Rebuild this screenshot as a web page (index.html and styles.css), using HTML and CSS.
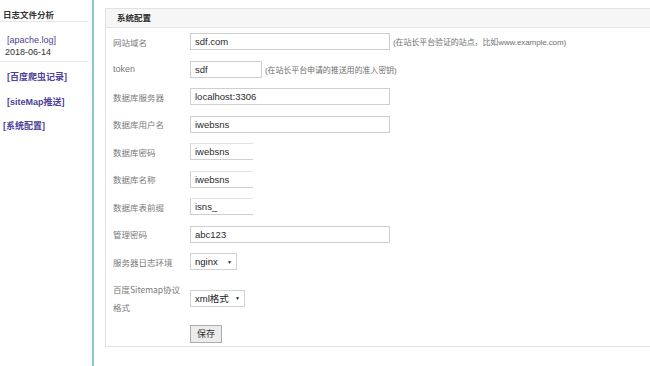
FILE: index.html
```html
<!DOCTYPE html>
<html lang="zh">
<head>
<meta charset="utf-8">
<title>系统配置</title>
<link rel="stylesheet" href="styles.css">
</head>
<body>
<div class="page">
  <aside class="side">
    <div class="side-title">日志文件分析</div>
    <div class="side-file">
      <a class="file-link">[apache.log]</a>
      <div class="file-date">2018-06-14</div>
    </div>
    <nav class="side-nav">
      <a class="nav-link">[百度爬虫记录]</a>
      <a class="nav-link">[siteMap推送]</a>
      <a class="nav-link nav-last">[系统配置]</a>
    </nav>
  </aside>
  <main class="main">
    <section class="panel">
      <div class="panel-head">系统配置</div>
      <div class="form">
        <div class="row">
          <label class="lbl">网站域名</label>
          <div class="ctl"><span class="inp w200">sdf.com</span><span class="hint">(在站长平台验证的站点，比如www.example.com)</span></div>
        </div>
        <div class="row">
          <label class="lbl lat">token</label>
          <div class="ctl"><span class="inp w72">sdf</span><span class="hint">(在站长平台申请的推送用的准入密钥)</span></div>
        </div>
        <div class="row">
          <label class="lbl">数据库服务器</label>
          <div class="ctl"><span class="inp w200">localhost:3306</span></div>
        </div>
        <div class="row">
          <label class="lbl">数据库用户名</label>
          <div class="ctl"><span class="inp w200">iwebsns</span></div>
        </div>
        <div class="row">
          <label class="lbl">数据库密码</label>
          <div class="ctl"><span class="inp cut">iwebsns</span></div>
        </div>
        <div class="row">
          <label class="lbl">数据库名称</label>
          <div class="ctl"><span class="inp cut">iwebsns</span></div>
        </div>
        <div class="row">
          <label class="lbl">数据库表前缀</label>
          <div class="ctl"><span class="inp cut">isns_</span></div>
        </div>
        <div class="row">
          <label class="lbl">管理密码</label>
          <div class="ctl"><span class="inp w200">abc123</span></div>
        </div>
        <div class="row">
          <label class="lbl">服务器日志环境</label>
          <div class="ctl"><span class="sel w46">nginx<span class="arrow">▼</span></span></div>
        </div>
        <div class="row row-tall">
          <label class="lbl lbl-2">百度Sitemap协议<br>格式</label>
          <div class="ctl"><span class="sel w54">xml格式<span class="arrow">▼</span></span></div>
        </div>
        <div class="row">
          <span class="lbl"></span>
          <div class="ctl"><span class="btn">保存</span></div>
        </div>
      </div>
    </section>
  </main>
</div>
</body>
</html>
```
FILE: styles.css
```css
html, body {
  margin: 0;
  padding: 0;
  background: #fff;
  overflow: hidden;
}
body {
  font-family: "Liberation Sans", "Noto Sans CJK SC", sans-serif;
  color: #333;
  width: 650px;
  height: 366px;
}
.page {
  display: flex;
  height: 366px;
}
.side {
  width: 92px;
  flex: none;
  border-right: 2px solid #8fc7c6;
  box-sizing: content-box;
}
.side-title {
  font-size: 8.5px;
  font-weight: bold;
  padding: 8px 0 0 3px;
  height: 13px;
  border-bottom: 1px solid #e6e6e6;
  margin-right: 4px;
  color: #333;
}
.side-file {
  padding: 12px 0 0 5px;
  height: 27px;
  border-bottom: 1px solid #e6e6e6;
  margin-right: 4px;
  font-size: 9px;
  line-height: 12px;
}
.file-link {
  display: block;
  color: #4d3f9a;
  padding-left: 2px;
}
.file-date {
  color: #333;
}
.side-nav {
  display: flex;
  flex-direction: column;
  padding: 9px 0 0 7px;
  gap: 11.5px;
}
.nav-link {
  font-size: 9px;
  line-height: 13px;
  font-weight: bold;
  color: #4d3f9a;
}
.nav-last {
  margin-left: -4px;
}
.main {
  flex: 1;
  padding: 8px 0 0 11px;
}
.panel {
  border: 1px solid #e2e2e2;
  border-right: none;
  width: 560px;
  height: 339px;
  box-sizing: border-box;
}
.panel-head {
  height: 18px;
  line-height: 18px;
  background: #f6f6f6;
  border-bottom: 1px solid #e6e6e6;
  font-size: 8.5px;
  font-weight: bold;
  color: #333;
  padding-left: 11px;
}
.form {
  padding-left: 7px;
}
.row {
  display: grid;
  grid-template-columns: 77px 1fr;
  align-items: center;
  height: 27.5px;
}
.row-tall {
  height: 45px;
}
.lbl {
  font-size: 8.5px;
  color: #7a7a7a;
  font-family: "Noto Sans CJK SC", "Liberation Sans", sans-serif;
  white-space: nowrap;
}
.lbl.lat {
  font-family: "Liberation Sans", sans-serif;
  font-size: 9px;
}
.lbl-2 {
  line-height: 18px;
}
.ctl {
  display: flex;
  align-items: center;
}
.inp {
  display: block;
  box-sizing: border-box;
  height: 17px;
  line-height: 15px;
  border: 1px solid #cfcfcf;
  padding-left: 4px;
  font-size: 9.5px;
  color: #2a2a2a;
  background: #fff;
}
.w200 { width: 200px; }
.w72 { width: 72px; }
.cut {
  width: 63px;
  border-right: none;
  border-top-color: #e2e2e2;
}
.hint {
  font-size: 8px;
  color: #707070;
  margin-left: 3px;
  font-family: "Liberation Sans", "Noto Sans CJK SC", sans-serif;
  white-space: nowrap;
  letter-spacing: -0.1px;
}
.sel {
  display: flex;
  align-items: center;
  justify-content: space-between;
  box-sizing: border-box;
  height: 17px;
  border: 1px solid #d3d3d3;
  padding: 0 4px 0 4px;
  font-size: 9.5px;
  color: #222;
  font-family: "Liberation Sans", "Noto Sans CJK SC", sans-serif;
}
.w46 { width: 47px; }
.w54 { width: 55px; }
.arrow {
  font-size: 5px;
  color: #222;
}
.btn {
  display: block;
  box-sizing: border-box;
  width: 32px;
  height: 18px;
  line-height: 16px;
  text-align: center;
  background: #ececec;
  border: 1px solid #adadad;
  font-size: 9px;
  color: #333;
  font-family: "Noto Sans CJK SC", sans-serif;
}
```
